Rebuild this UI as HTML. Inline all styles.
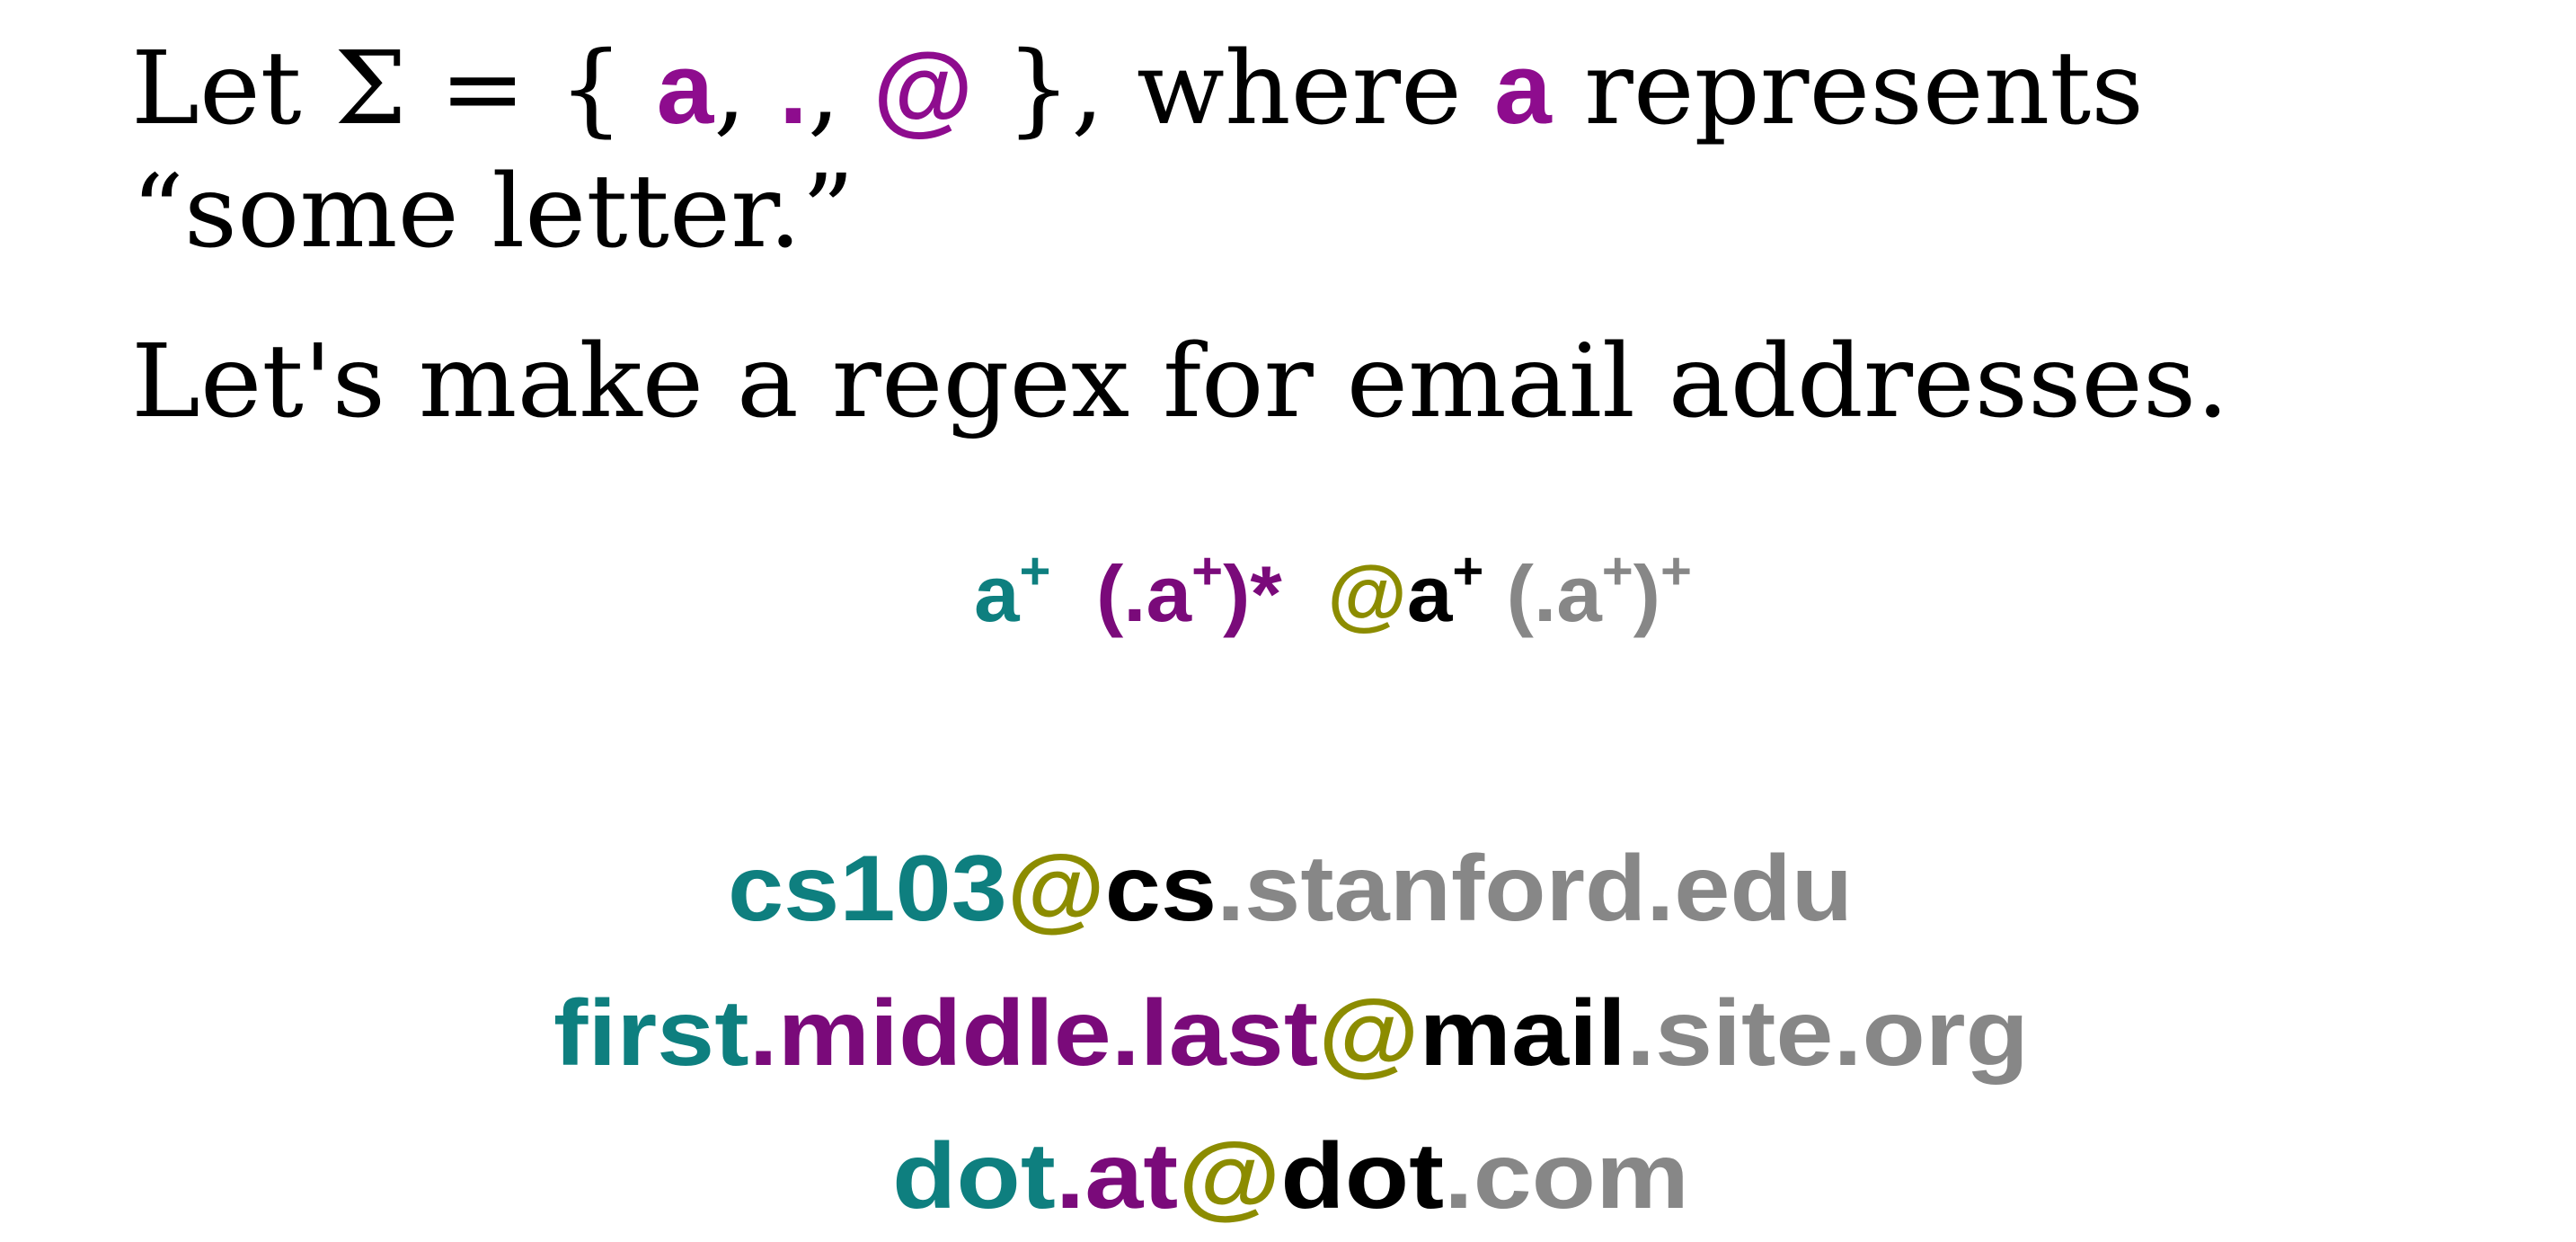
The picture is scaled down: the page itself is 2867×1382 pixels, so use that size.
<!DOCTYPE html>
<html><head><meta charset="utf-8"><style>
html,body{margin:0;padding:0;background:#fff;width:2867px;height:1382px;overflow:hidden}
svg{display:block}
.s{font-family:"DejaVu Serif","Liberation Serif",serif;fill:#000}
.b{font-family:"Liberation Sans",sans-serif;font-weight:bold}
.p{fill:#8e0c8e}.t{fill:#0e7f7f}.pu{fill:#7a0a7a}.o{fill:#8c8c00}.k{fill:#000}.g{fill:#878787}
</style></head><body>
<svg width="2867" height="1382" xmlns="http://www.w3.org/2000/svg">
<text class="s" x="146" y="137" font-size="112" textLength="2240" lengthAdjust="spacingAndGlyphs">Let Σ = { <tspan class="b p">a</tspan>, <tspan class="b p">.</tspan>, <tspan class="b p">@</tspan> }, where <tspan class="b p">a</tspan> represents</text>
<text class="s" x="146" y="274" font-size="112" textLength="805" lengthAdjust="spacingAndGlyphs">“some letter.”</text>
<text class="s" x="146" y="463" font-size="112" textLength="2335" lengthAdjust="spacingAndGlyphs">Let's make a regex for email addresses.</text>
<text class="b" x="1084" y="691" font-size="88" textLength="799" lengthAdjust="spacingAndGlyphs"><tspan class="t">a<tspan font-size="58" dy="-36">+</tspan></tspan><tspan class="pu" dy="36">&#160;&#160;(.a<tspan font-size="58" dy="-36">+</tspan><tspan dy="36">)*</tspan></tspan><tspan class="o">&#160;&#160;@</tspan><tspan class="k">a<tspan font-size="58" dy="-36">+</tspan></tspan><tspan class="g" dy="36">&#160;(.a<tspan font-size="58" dy="-36">+</tspan><tspan dy="36">)</tspan><tspan font-size="58" dy="-36">+</tspan></tspan></text>
<text class="b" x="810" y="1024" font-size="104" textLength="1252" lengthAdjust="spacingAndGlyphs"><tspan class="t">cs103</tspan><tspan class="o">@</tspan><tspan class="k">cs</tspan><tspan class="g">.stanford.edu</tspan></text>
<text class="b" x="616" y="1185" font-size="104" textLength="1642" lengthAdjust="spacingAndGlyphs"><tspan class="t">first</tspan><tspan class="pu">.middle.last</tspan><tspan class="o">@</tspan><tspan class="k">mail</tspan><tspan class="g">.site.org</tspan></text>
<text class="b" x="993" y="1344" font-size="104" textLength="887" lengthAdjust="spacingAndGlyphs"><tspan class="t">dot</tspan><tspan class="pu">.at</tspan><tspan class="o">@</tspan><tspan class="k">dot</tspan><tspan class="g">.com</tspan></text>
</svg>
</body></html>
